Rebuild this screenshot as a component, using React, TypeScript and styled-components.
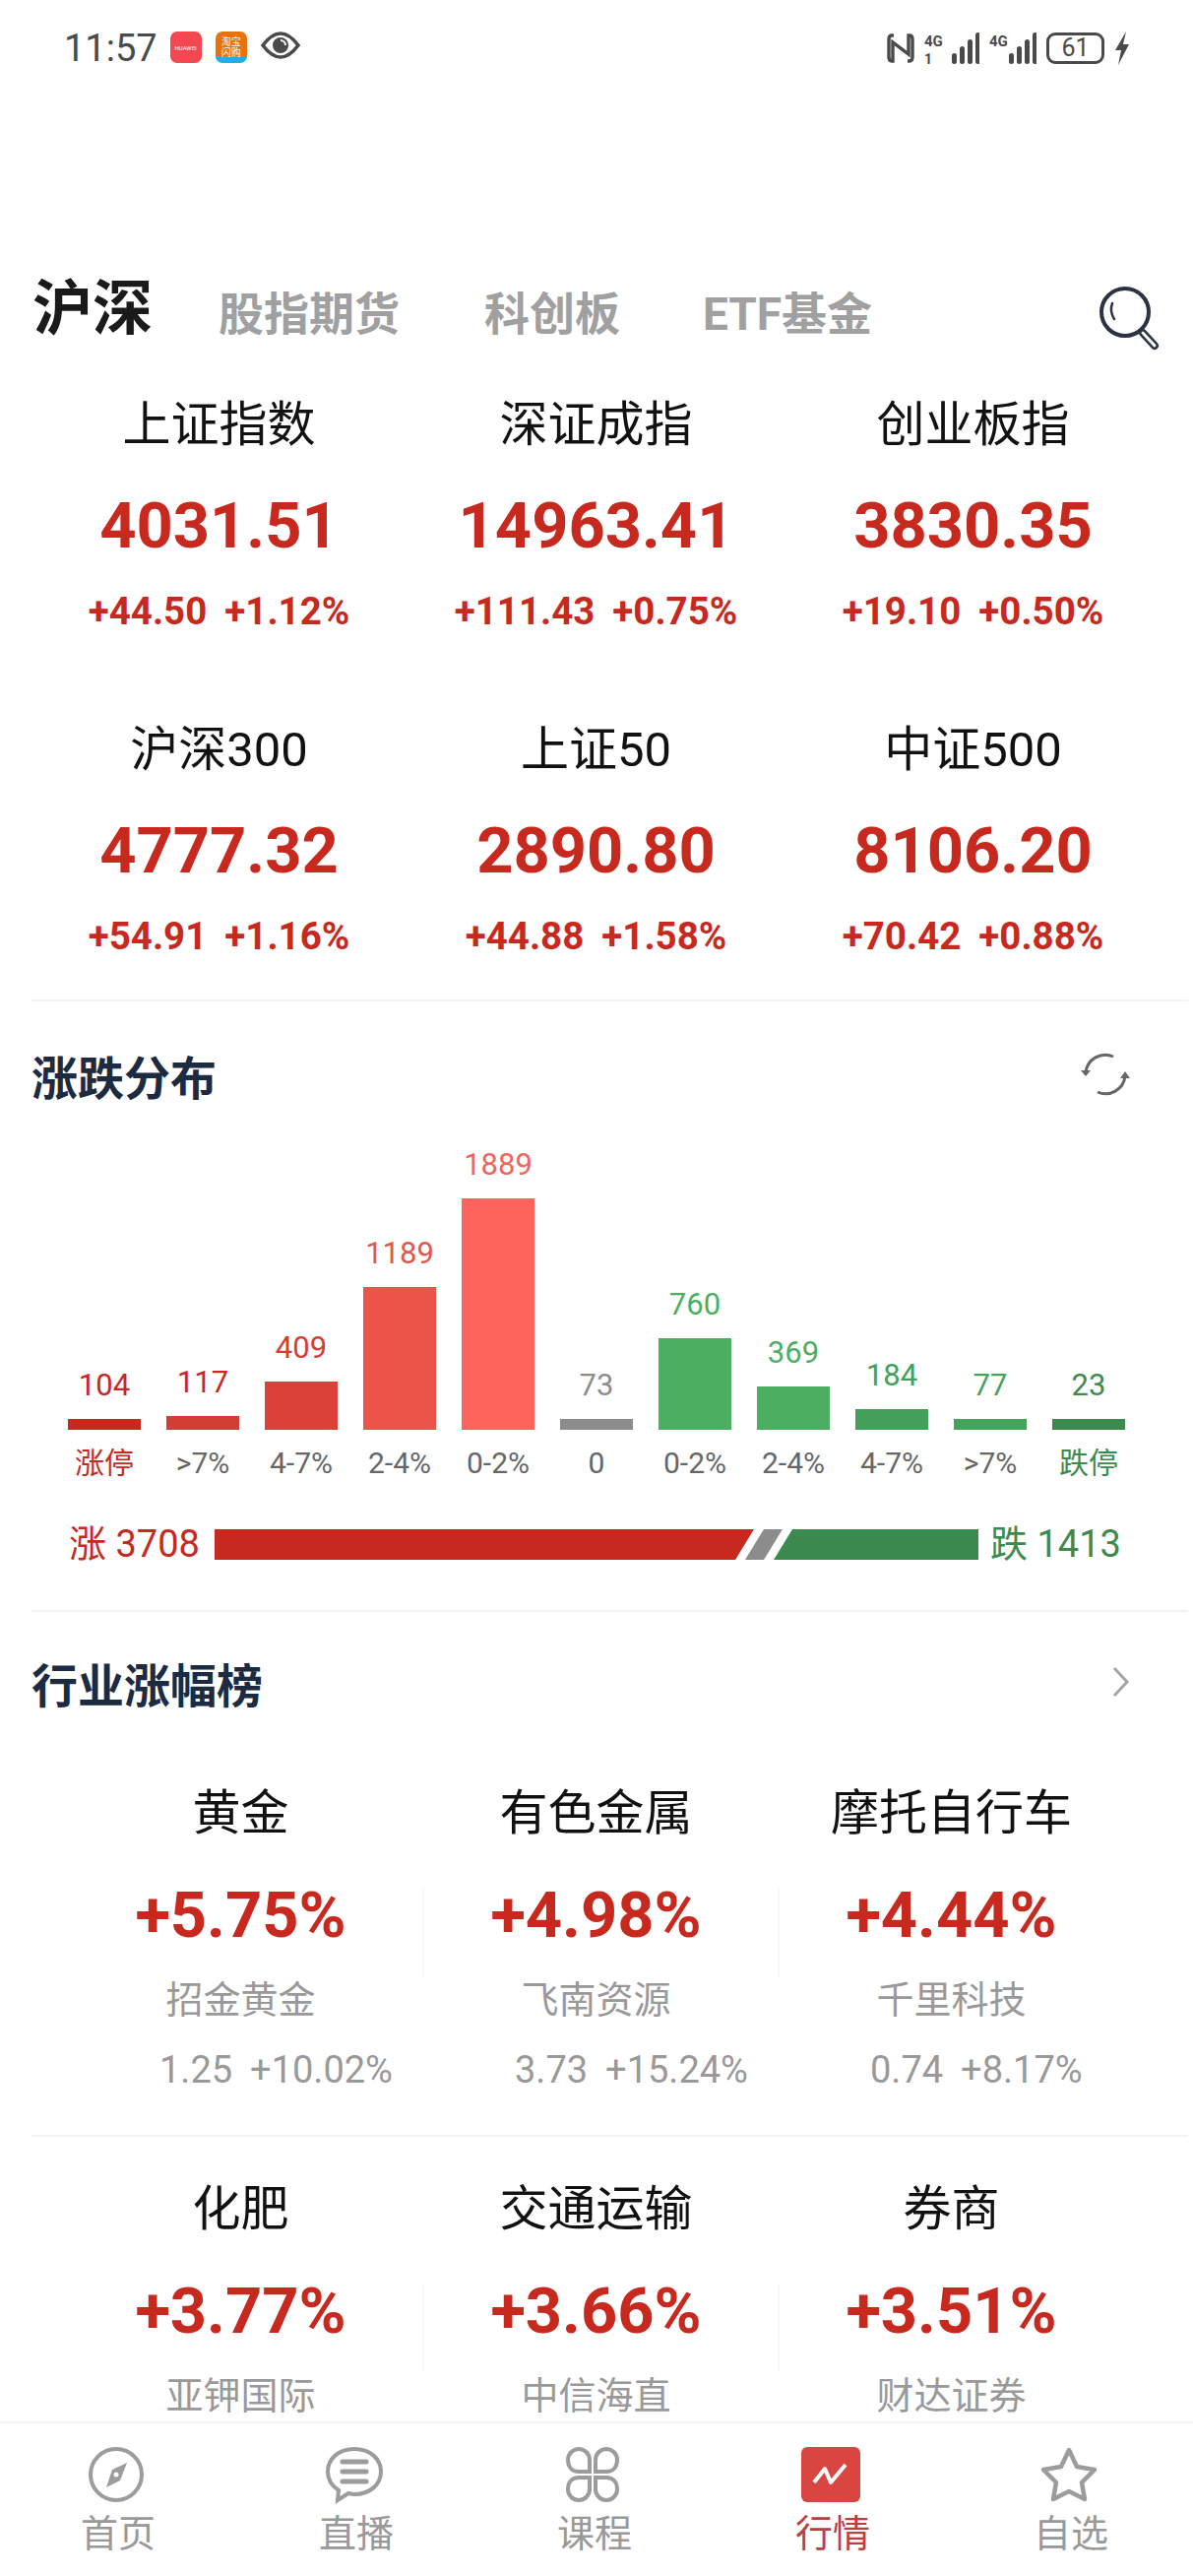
import styled, { createGlobalStyle } from "styled-components";

const RED = "#c7291f";
const GREEN = "#3d8a4e";

const GlobalStyle = createGlobalStyle`
  html, body {
    margin: 0;
    padding: 0;
    background: #fff;
    font-family: Roboto, "Noto Sans CJK SC", sans-serif;
  }
`;

const Page = styled.div`
  width: 1212px;
  height: 2616px;
  display: flex;
  flex-direction: column;
  overflow: hidden;
  background: #fff;
`;

const Content = styled.div`
  flex: 1;
  min-height: 0;
  overflow: hidden;
`;

/* status bar */
const StatusBar = styled.div`
  height: 100px;
  display: flex;
  align-items: flex-start;
  padding: 32px 64px 0 65px;
  box-sizing: border-box;
`;

const Time = styled.div`
  font-size: 38px;
  line-height: 34px;
  color: #4a4a4a;
  margin-right: 13px;
`;

const AppIcon = styled.div<{ $bg: string }>`
  width: 32px;
  height: 32px;
  border-radius: 7px;
  background: ${({ $bg }) => $bg};
  margin-right: 14px;
  color: #fff;
  display: flex;
  flex-direction: column;
  align-items: center;
  justify-content: center;
  overflow: hidden;
  flex-shrink: 0;
`;

const AppIconText = styled.span<{ $size: number }>`
  font-size: ${({ $size }) => $size}px;
  line-height: ${({ $size }) => $size + 1}px;
  white-space: nowrap;
  text-align: center;
`;

const StatusRight = styled.div`
  margin-left: auto;
  display: flex;
  align-items: center;
  height: 34px;
  gap: 10px;
`;

const Battery = styled.div`
  width: 59px;
  height: 32px;
  box-sizing: border-box;
  border: 3px solid #4a4a4a;
  border-radius: 9px;
  font-size: 25px;
  line-height: 26px;
  text-align: center;
  color: #4a4a4a;
`;

/* tabs */
const Header = styled.div`
  height: 100px;
  margin-top: 170px;
  padding: 0 30px 0 33px;
  display: flex;
  align-items: baseline;
`;

const ActiveTab = styled.div`
  font-size: 61px;
  line-height: 88px;
  font-weight: 700;
  color: #1a1a1a;
  margin-right: 67px;
`;

const Tab = styled.div<{ $gap: number }>`
  font-size: 46px;
  font-weight: 700;
  color: #a0a0a0;
  margin-right: ${({ $gap }) => $gap}px;
`;

const SearchBox = styled.div`
  margin-left: auto;
  align-self: flex-start;
  margin-top: 21px;
  width: 68px;
  height: 66px;
`;

/* index cards */
const IndexGrid = styled.div`
  display: grid;
  grid-template-columns: repeat(3, 383px);
  row-gap: 86px;
  padding: 32px 0 0 31px;
`;

const Cell = styled.div`
  display: flex;
  flex-direction: column;
  align-items: center;
  position: relative;
`;

const Name = styled.div`
  font-size: 49px;
  line-height: 60px;
  color: #111;
`;

const BigValue = styled.div`
  font-size: 65px;
  line-height: 80px;
  margin-top: 32px;
  font-weight: 700;
  color: ${RED};
`;

const ChangeRow = styled.div`
  display: flex;
  gap: 18px;
  margin-top: 22px;
  font-size: 38.5px;
  line-height: 50px;
  font-weight: 700;
  color: ${RED};
`;

const Divider = styled.div<{ $top: number }>`
  height: 2px;
  margin: ${({ $top }) => $top}px 5px 0 32px;
  background: #f3f3f3;
`;

/* sections */
const SectionHead = styled.div<{ $height: number }>`
  height: ${({ $height }) => $height}px;
  display: flex;
  align-items: center;
  justify-content: space-between;
  padding: 0 64px 0 32px;
`;

const SectionTitle = styled.div`
  font-size: 47px;
  font-weight: 700;
  color: #1d2b42;
`;

/* distribution chart */
const Chart = styled.div`
  display: flex;
  gap: 26px;
  height: 287px;
  padding-left: 69px;
  align-items: flex-end;
`;

const Column = styled.div`
  width: 74px;
  display: flex;
  flex-direction: column;
  align-items: center;
`;

const ColumnValue = styled.div<{ $color: string }>`
  font-size: 31px;
  line-height: 40px;
  margin-bottom: 14px;
  color: ${({ $color }) => $color};
`;

const Bar = styled.div<{ $color: string; $height: number }>`
  width: 74px;
  height: ${({ $height }) => $height}px;
  background: ${({ $color }) => $color};
`;

const AxisRow = styled.div`
  display: flex;
  gap: 26px;
  padding-left: 69px;
  margin-top: 14px;
`;

const AxisLabel = styled.div<{ $color: string }>`
  width: 74px;
  text-align: center;
  white-space: nowrap;
  font-size: 30px;
  line-height: 40px;
  color: ${({ $color }) => $color};
`;

const Summary = styled.div`
  display: flex;
  align-items: center;
  height: 31px;
  margin-top: 47px;
  padding-left: 70px;
`;

const SummaryText = styled.div<{ $color: string; $width: number }>`
  width: ${({ $width }) => $width}px;
  font-size: 38px;
  line-height: 31px;
  white-space: nowrap;
  color: ${({ $color }) => $color};
`;

const UpBar = styled.div`
  width: 548px;
  height: 31px;
  background: ${RED};
  clip-path: polygon(0 0, 100% 0, calc(100% - 19px) 100%, 0 100%);
`;

const FlatBar = styled.div`
  width: 38px;
  height: 31px;
  margin-left: -9px;
  background: #8c8c8c;
  clip-path: polygon(19px 0, 100% 0, calc(100% - 19px) 100%, 0 100%);
`;

const DownBar = styled.div`
  width: 208px;
  height: 31px;
  margin-left: -9px;
  margin-right: 12px;
  background: ${GREEN};
  clip-path: polygon(19px 0, 100% 0, 100% 100%, 0 100%);
`;

/* industry list */
const IndustryRow = styled.div<{ $ruled?: boolean }>`
  margin: 0 5px 0 32px;
  padding: ${({ $ruled }) => ($ruled ? "33px 0 41px 32px" : "44px 0 0 32px")};
  display: grid;
  grid-template-columns: repeat(3, 361px);
  border-bottom: ${({ $ruled }) => ($ruled ? "2px solid #f3f3f3" : "none")};
`;

const IndustryValue = styled(BigValue)`
  margin-top: 33px;

  &::after {
    content: "";
    position: absolute;
    top: 105px;
    right: -6px;
    width: 2px;
    height: 90px;
    background: ${({ theme }) => theme.sep || "#f7f7f7"};
  }
`;

const IndustryCell = styled(Cell)<{ $last?: boolean }>`
  ${({ $last }) => ($last ? `${IndustryValue}::after { display: none; }` : "")}
`;

const StockName = styled.div`
  font-size: 38px;
  line-height: 50px;
  margin-top: 21px;
  color: #999;
`;

const StockQuote = styled.div`
  align-self: flex-start;
  padding-left: 98px;
  display: flex;
  gap: 18px;
  font-size: 38px;
  line-height: 50px;
  margin-top: 21px;
  color: #999;
  white-space: nowrap;
`;

/* bottom tabs */
const TabBar = styled.div`
  height: 157px;
  flex-shrink: 0;
  box-sizing: border-box;
  border-top: 2px solid #f3f3f3;
  padding: 22px 0 0 0;
  display: grid;
  grid-template-columns: repeat(5, 242px);
  margin-left: -1px;
`;

const TabItem = styled.div<{ $active?: boolean }>`
  display: flex;
  flex-direction: column;
  align-items: center;
  font-size: 38px;
  line-height: 44px;
  color: ${({ $active }) => ($active ? "#bb3f3c" : "#999")};
`;

const TabIconBox = styled.div`
  height: 60px;
  width: 64px;
  margin-bottom: 8px;
`;

const indices = [
  { name: "上证指数", value: "4031.51", diff: "+44.50", pct: "+1.12%" },
  { name: "深证成指", value: "14963.41", diff: "+111.43", pct: "+0.75%" },
  { name: "创业板指", value: "3830.35", diff: "+19.10", pct: "+0.50%" },
  { name: "沪深300", value: "4777.32", diff: "+54.91", pct: "+1.16%" },
  { name: "上证50", value: "2890.80", diff: "+44.88", pct: "+1.58%" },
  { name: "中证500", value: "8106.20", diff: "+70.42", pct: "+0.88%" },
];

const columns = [
  { value: 104, height: 11, bar: "#c7291f", text: "#c7291f", label: "涨停", labelColor: "#c7291f" },
  { value: 117, height: 14, bar: "#d23e33", text: "#c7291f", label: ">7%", labelColor: "#666" },
  { value: 409, height: 49, bar: "#db4138", text: "#d23e33", label: "4-7%", labelColor: "#666" },
  { value: 1189, height: 145, bar: "#ec5349", text: "#e2574c", label: "2-4%", labelColor: "#666" },
  { value: 1889, height: 235, bar: "#ff645c", text: "#f0645c", label: "0-2%", labelColor: "#666" },
  { value: 73, height: 11, bar: "#8c8c8c", text: "#8c8c8c", label: "0", labelColor: "#666" },
  { value: 760, height: 93, bar: "#4cae61", text: "#4cae61", label: "0-2%", labelColor: "#666" },
  { value: 369, height: 44, bar: "#4cae61", text: "#4cae61", label: "2-4%", labelColor: "#666" },
  { value: 184, height: 21, bar: "#42a058", text: "#42a058", label: "4-7%", labelColor: "#666" },
  { value: 77, height: 11, bar: "#45a35a", text: "#45a35a", label: ">7%", labelColor: "#666" },
  { value: 23, height: 11, bar: GREEN, text: GREEN, label: "跌停", labelColor: GREEN },
];

const industriesTop = [
  { name: "黄金", value: "+5.75%", stock: "招金黄金", price: "1.25", pct: "+10.02%" },
  { name: "有色金属", value: "+4.98%", stock: "飞南资源", price: "3.73", pct: "+15.24%" },
  { name: "摩托自行车", value: "+4.44%", stock: "千里科技", price: "0.74", pct: "+8.17%" },
];

const industriesNext = [
  { name: "化肥", value: "+3.77%", stock: "亚钾国际" },
  { name: "交通运输", value: "+3.66%", stock: "中信海直" },
  { name: "券商", value: "+3.51%", stock: "财达证券" },
];

const NfcIcon = () => (
  <svg width="28" height="30" viewBox="0 0 28 30" fill="none" stroke="#4a4a4a" strokeWidth="3.4">
    <path d="M7 2H5Q2 2 2 6V24Q2 28 5 28H6V9L22 21V2H23Q26 2 26 6V24Q26 28 23 28H21" />
  </svg>
);

const SignalIcon = ({ width, sim }: { width: number; sim?: boolean }) => (
  <svg width={width} height="34" viewBox={`0 0 ${width} 34`} fill="#4a4a4a">
    <text x="0" y="15" fontSize="15" fontWeight="700" fontFamily="Roboto, sans-serif">
      4G
    </text>
    {sim && (
      <text x="0" y="33" fontSize="14" fontWeight="700" fontFamily="Roboto, sans-serif">
        1
      </text>
    )}
    {[0, 1, 2, 3].map((i) => (
      <rect
        key={i}
        x={width - 28 + i * 8}
        y={22 - i * 7}
        width="5"
        height={11 + i * 7}
        rx="2.5"
      />
    ))}
  </svg>
);

const BoltIcon = () => (
  <svg width="16" height="34" viewBox="0 0 16 34" fill="#4a4a4a">
    <path d="M12 0L1 19H7L4 34L15 13H9Z" />
  </svg>
);

const EyeIcon = () => (
  <svg width="40" height="28" viewBox="0 0 40 28" fill="none">
    <path d="M2 14Q11 2 20 2T38 14Q29 26 20 26T2 14Z" stroke="#4a4a4a" strokeWidth="3.6" />
    <circle cx="20" cy="14" r="8" fill="#4a4a4a" />
    <path d="M20 9A5 5 0 0 1 25 14" stroke="#fff" strokeWidth="2" />
  </svg>
);

const SearchIcon = () => (
  <svg width="68" height="66" viewBox="0 0 68 66" fill="none">
    <circle cx="29" cy="26" r="24" stroke="#2b3240" strokeWidth="4" />
    <path d="M16 17Q13 25 18 33" stroke="#2b3240" strokeWidth="2.5" strokeLinecap="round" />
    <path d="M47 47L59 60" stroke="#2b3240" strokeWidth="8" strokeLinecap="round" />
    <path d="M47 47L59 60" stroke="#fff" strokeWidth="3" strokeLinecap="round" />
  </svg>
);

const RefreshIcon = () => (
  <svg width="50" height="44" viewBox="0 0 50 44" fill="none" stroke="#666" strokeWidth="3">
    <path d="M5 20A20 20 0 0 1 33 4" />
    <path d="M45 24A20 20 0 0 1 17 40" />
    <path d="M0 18L5 24L10 18Z" fill="#666" stroke="none" />
    <path d="M40 26L45 19L50 26Z" fill="#666" stroke="none" />
  </svg>
);

const ChevronIcon = () => (
  <svg width="18" height="32" viewBox="0 0 18 32" fill="none" stroke="#a5a5a5" strokeWidth="3">
    <path d="M2 2L15 16L2 30" />
  </svg>
);

const CompassIcon = () => (
  <svg width="60" height="60" viewBox="0 0 60 60" fill="none">
    <circle cx="30" cy="30" r="26" stroke="#9c9c9c" strokeWidth="4" />
    <path d="M41 18L34 36L20 43L26 25Z" fill="#9c9c9c" />
    <circle cx="30" cy="30" r="2.5" fill="#fff" />
  </svg>
);

const ChatIcon = () => (
  <svg width="60" height="60" viewBox="0 0 60 60" fill="none" stroke="#9c9c9c" strokeWidth="4">
    <path d="M30 4C14 4 3 14 3 27C3 36 8 42 14 46L13 56L24 49C26 49.500 28 50 30 50C46 50 57 40 57 27C57 14 46 4 30 4Z" />
    <path d="M18 17H42M18 27H42M18 37H42" strokeWidth="5" strokeLinecap="round" />
  </svg>
);

const CloverIcon = () => (
  <svg width="60" height="60" viewBox="0 0 60 60" fill="none" stroke="#9c9c9c" strokeWidth="4">
    <path d="M27 27H16C9 27 5 22 5 15C5 9 10 4 16 4C22 4 27 9 27 15Z" />
    <path d="M33 27H44C51 27 55 22 55 15C55 9 50 4 44 4C38 4 33 9 33 15Z" />
    <path d="M27 33H16C9 33 5 38 5 45C5 51 10 56 16 56C22 56 27 51 27 45Z" />
    <path d="M33 33H44C51 33 55 38 55 45C55 51 50 56 44 56C38 56 33 51 33 45Z" />
  </svg>
);

const MarketIcon = () => (
  <svg width="60" height="60" viewBox="0 0 60 60" fill="none">
    <rect x="0" y="2" width="60" height="56" rx="6" fill="#d94540" />
    <path d="M13 38L24 24L30 38L45 20" stroke="#fff" strokeWidth="4" strokeLinejoin="round" />
  </svg>
);

const StarIcon = () => (
  <svg width="60" height="60" viewBox="0 0 60 60" fill="none" stroke="#9c9c9c" strokeWidth="4.500">
    <path d="M30 5L38 22L56 25L43 38L46 55L30 47L14 55L17 38L4 25L22 22Z" strokeLinejoin="round" />
  </svg>
);

const tabs = [
  { label: "首页", icon: <CompassIcon /> },
  { label: "直播", icon: <ChatIcon /> },
  { label: "课程", icon: <CloverIcon /> },
  { label: "行情", icon: <MarketIcon />, active: true },
  { label: "自选", icon: <StarIcon /> },
];

export default function App() {
  return (
    <Page>
      <GlobalStyle />
      <Content>
        <StatusBar>
          <Time>11:57</Time>
          <AppIcon $bg="#f4474f">
            <AppIconText $size={6}>HUAWEI</AppIconText>
          </AppIcon>
          <AppIcon $bg="linear-gradient(#e8720c 78%, #29abe2 78%)">
            <AppIconText $size={10}>淘宝</AppIconText>
            <AppIconText $size={10}>闪购</AppIconText>
          </AppIcon>
          <EyeIcon />
          <StatusRight>
            <NfcIcon />
            <SignalIcon width={56} sim />
            <SignalIcon width={48} />
            <Battery>61</Battery>
            <BoltIcon />
          </StatusRight>
        </StatusBar>

        <Header>
          <ActiveTab>沪深</ActiveTab>
          <Tab $gap={86}>股指期货</Tab>
          <Tab $gap={84}>科创板</Tab>
          <Tab $gap={0}>ETF基金</Tab>
          <SearchBox>
            <SearchIcon />
          </SearchBox>
        </Header>

        <IndexGrid>
          {indices.map((item) => (
            <Cell key={item.name}>
              <Name>{item.name}</Name>
              <BigValue>{item.value}</BigValue>
              <ChangeRow>
                <span>{item.diff}</span>
                <span>{item.pct}</span>
              </ChangeRow>
            </Cell>
          ))}
        </IndexGrid>
        <Divider $top={39} />

        <SectionHead $height={148}>
          <SectionTitle>涨跌分布</SectionTitle>
          <RefreshIcon />
        </SectionHead>
        <Chart>
          {columns.map((col, i) => (
            <Column key={i}>
              <ColumnValue $color={col.text}>{col.value}</ColumnValue>
              <Bar $color={col.bar} $height={col.height} />
            </Column>
          ))}
        </Chart>
        <AxisRow>
          {columns.map((col, i) => (
            <AxisLabel key={i} $color={col.labelColor}>
              {col.label}
            </AxisLabel>
          ))}
        </AxisRow>
        <Summary>
          <SummaryText $color={RED} $width={148}>
            涨 3708
          </SummaryText>
          <UpBar />
          <FlatBar />
          <DownBar />
          <SummaryText $color={GREEN} $width={140}>
            跌 1413
          </SummaryText>
        </Summary>
        <Divider $top={51} />

        <SectionHead $height={142}>
          <SectionTitle>行业涨幅榜</SectionTitle>
          <ChevronIcon />
        </SectionHead>
        <IndustryRow $ruled>
          {industriesTop.map((item, i) => (
            <IndustryCell key={item.name} $last={i === 2}>
              <Name>{item.name}</Name>
              <IndustryValue>{item.value}</IndustryValue>
              <StockName>{item.stock}</StockName>
              <StockQuote>
                <span>{item.price}</span>
                <span>{item.pct}</span>
              </StockQuote>
            </IndustryCell>
          ))}
        </IndustryRow>
        <IndustryRow>
          {industriesNext.map((item, i) => (
            <IndustryCell key={item.name} $last={i === 2}>
              <Name>{item.name}</Name>
              <IndustryValue>{item.value}</IndustryValue>
              <StockName>{item.stock}</StockName>
            </IndustryCell>
          ))}
        </IndustryRow>
      </Content>

      <TabBar>
        {tabs.map((tab) => (
          <TabItem key={tab.label} $active={tab.active}>
            <TabIconBox>{tab.icon}</TabIconBox>
            {tab.label}
          </TabItem>
        ))}
      </TabBar>
    </Page>
  );
}
